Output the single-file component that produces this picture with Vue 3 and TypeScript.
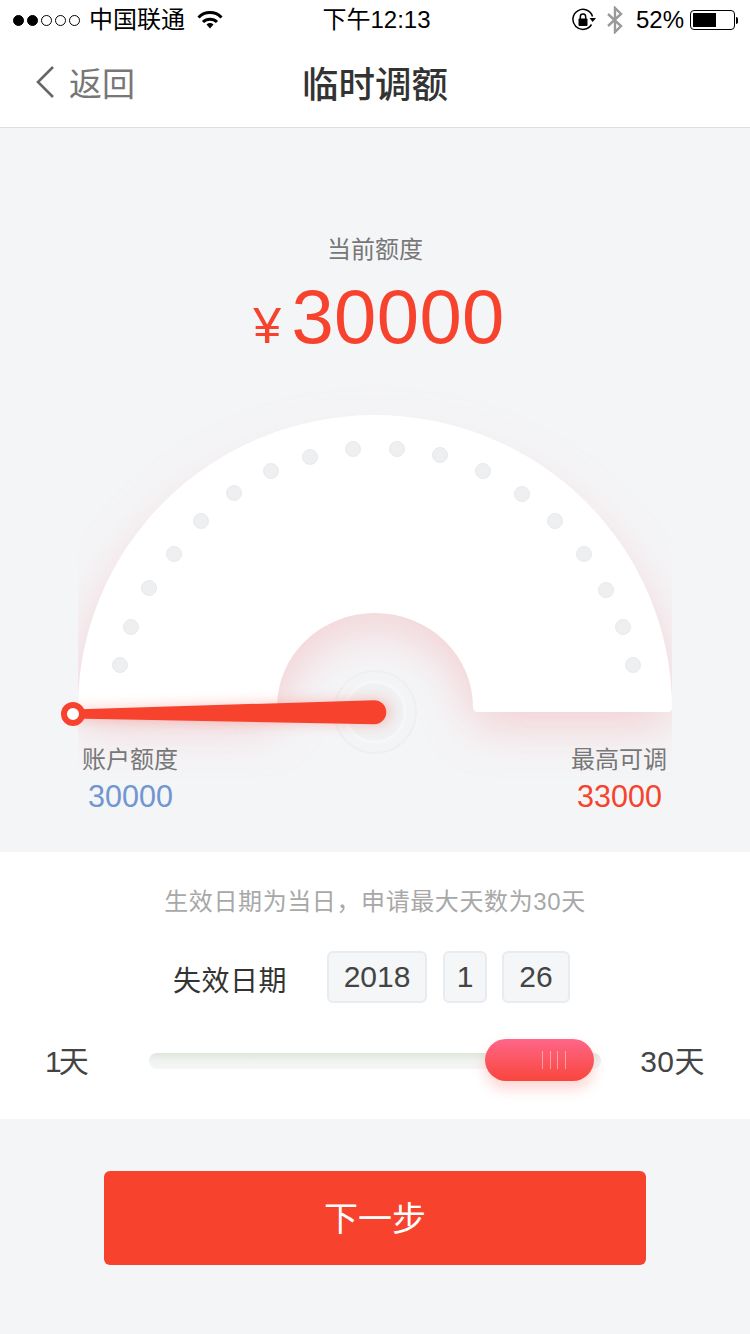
<script setup lang="ts">
// tick positions are in page coordinates, the gauge svg uses the same ones
const ticks: [number, number][] = [
  [120, 665], [131, 627], [149, 588], [174, 554], [201, 521], [234, 493],
  [271, 471], [310, 457], [353, 449], [397, 449], [440, 455], [483, 471],
  [522, 494], [555, 521], [584, 554], [606, 590], [623, 627], [633, 665],
]

const signal = [true, true, false, false, false]
const dateParts = [
  { value: '2018', kind: 'year' },
  { value: '1', kind: 'month' },
  { value: '26', kind: 'day' },
]

const gaugePath =
  'M78 708 A297 293 0 0 1 672 708 Q672 712 668 712 L478 712 Q473 712 473 707 A98 94 0 0 0 277 707 Q277 712 272 712 L82 712 Q78 712 78 708 Z'
</script>

<template>
  <div class="page">
    <div class="status">
      <div class="status__left">
        <span
          v-for="(on, i) in signal"
          :key="i"
          class="status__dot"
          :class="{ 'status__dot--on': on }" />
        <span class="status__carrier">中国联通</span>
        <svg class="status__wifi" width="26" height="18" viewBox="0 0 26 18">
          <path d="M1.5 6.5 A16 16 0 0 1 24.5 6.5" fill="none" stroke="#000" stroke-width="3" />
          <path d="M6 11 A10 10 0 0 1 20 11" fill="none" stroke="#000" stroke-width="3" />
          <path d="M9.5 13.5 A5.5 5.5 0 0 1 16.5 13.5 L13 17.5 Z" fill="#000" />
        </svg>
      </div>
      <div class="status__time">下午12:13</div>
      <div class="status__right">
        <svg width="24" height="24" viewBox="0 0 24 24">
          <path d="M20.5 8.5 A10 10 0 1 0 19.5 16.5" fill="none" stroke="#000" stroke-width="1.5" />
          <path d="M17.5 10 H24 L20.7 14 Z" fill="#000" />
          <rect x="6.5" y="10.5" width="9" height="7.5" rx="1" fill="#000" />
          <path d="M8.3 11 V8.8 A2.7 2.7 0 0 1 13.7 8.8 V11" fill="none" stroke="#000" stroke-width="1.5" />
        </svg>
        <svg class="status__bt" width="18" height="28" viewBox="0 0 18 28">
          <path d="M2 8 L15 20 L9 26 V2 L15 8 L2 20" fill="none" stroke="#9a9a9a" stroke-width="2.4" />
        </svg>
        <span class="status__pct">52%</span>
        <span class="status__battery"><span class="status__level" /></span>
        <span class="status__nub" />
      </div>
    </div>

    <header class="nav">
      <div class="nav__back">
        <svg width="20" height="34" viewBox="0 0 20 34">
          <path d="M18 2 L3 17 L18 32" fill="none" stroke="#666" stroke-width="2.6" />
        </svg>
        <span>返回</span>
      </div>
      <h1 class="nav__title">临时调额</h1>
    </header>

    <section class="quota">
      <div class="quota__label">当前额度</div>
      <div class="quota__amount"><span class="quota__yen">¥</span>30000</div>

      <div class="gauge">
        <svg class="gauge__svg" width="750" height="345" viewBox="0 400 750 345">
          <defs>
            <filter id="glow" x="-20%" y="-20%" width="140%" height="140%">
              <feGaussianBlur stdDeviation="24" />
            </filter>
            <filter id="needleGlow" x="-10%" y="-200%" width="120%" height="500%">
              <feGaussianBlur stdDeviation="7" />
            </filter>
            <clipPath id="glowClip">
              <rect x="78" y="380" width="594" height="420" />
            </clipPath>
            <!-- glow is barely there at the crown and strongest along the base -->
            <linearGradient id="glowFill" gradientUnits="userSpaceOnUse" x1="0" y1="415" x2="0" y2="620">
              <stop offset="0" stop-color="#f2a9ad" stop-opacity="0.2" />
              <stop offset="1" stop-color="#f2a9ad" />
            </linearGradient>
          </defs>
          <g clip-path="url(#glowClip)">
            <path :d="gaugePath" fill="url(#glowFill)" opacity="0.5" filter="url(#glow)" transform="translate(0 14)" />
          </g>
          <path :d="gaugePath" fill="#fff" />
          <circle
            v-for="(t, i) in ticks"
            :key="i"
            :cx="t[0]"
            :cy="t[1]"
            r="7.5"
            fill="#eeeff0"
            stroke="#e9e9eb"
            stroke-width="1" />
          <circle cx="375" cy="712" r="41" fill="#f3f4f6" stroke="#eeeff1" stroke-width="2" />
          <circle cx="375" cy="712" r="30" fill="#f0f1f3" stroke="#f6f7f8" stroke-width="3" />
          <path
            d="M73 710 L378 700 A12 12 0 0 1 378 724 L73 718 Z"
            fill="#f7432e"
            opacity="0.3"
            filter="url(#needleGlow)" />
          <path d="M73 709.5 L374 700.2 A12 12 0 0 1 374.5 724.2 L73 718.5 Z" fill="#f7432e" />
          <circle cx="73" cy="714" r="9" fill="#fff" stroke="#f7432e" stroke-width="6" />
        </svg>
      </div>

      <div class="legend">
        <div class="legend__item">
          <div class="legend__name">账户额度</div>
          <div class="legend__num legend__num--blue">30000</div>
        </div>
        <div class="legend__item">
          <div class="legend__name">最高可调</div>
          <div class="legend__num legend__num--red">33000</div>
        </div>
      </div>
    </section>

    <section class="panel">
      <p class="panel__hint">生效日期为当日，申请最大天数为30天</p>
      <div class="date">
        <span class="date__label">失效日期</span>
        <span
          v-for="part in dateParts"
          :key="part.kind"
          class="date__box"
          :class="`date__box--${part.kind}`">{{ part.value }}</span>
      </div>
      <div class="range">
        <span class="range__min">1天</span>
        <div class="range__track">
          <div class="range__thumb"><i /><i /><i /><i /></div>
        </div>
        <span class="range__max">30天</span>
      </div>
    </section>

    <div class="action">
      <button class="action__btn" type="button">下一步</button>
    </div>
  </div>
</template>

<style>
html,
body {
  margin: 0;
  background: #f4f5f7;
}
</style>

<style scoped>
.page {
  width: 750px;
  height: 1334px;
  overflow: hidden;
  background: #f4f5f7;
  font-family: "Liberation Sans", "Noto Sans CJK SC", sans-serif;
  color: #333;
}

.status {
  position: relative;
  display: flex;
  justify-content: space-between;
  align-items: center;
  height: 40px;
  padding: 0 12px 0 13px;
  background: #fff;
  color: #000;
  font-size: 24px;
}

.status__left,
.status__right {
  display: flex;
  align-items: center;
}

.status__dot {
  box-sizing: border-box;
  width: 11px;
  height: 11px;
  margin-right: 3px;
  border: 1px solid #000;
  border-radius: 50%;
}

.status__dot--on {
  background: #000;
}

.status__carrier {
  margin-left: 6px;
  line-height: 36px;
}

.status__wifi {
  margin-left: 12px;
}

.status__time {
  position: absolute;
  left: 3px;
  right: 0;
  text-align: center;
  line-height: 36px;
  pointer-events: none;
}

.status__bt {
  margin-left: 10px;
}

.status__pct {
  margin-left: 12px;
}

.status__battery {
  box-sizing: border-box;
  width: 45px;
  height: 20px;
  margin-left: 6px;
  padding: 2px;
  border: 1px solid #000;
  border-radius: 4px;
}

.status__level {
  display: block;
  width: 23px;
  height: 100%;
  background: #000;
}

.status__nub {
  width: 2px;
  height: 7px;
  margin-left: 1px;
  background: #000;
  border-radius: 0 2px 2px 0;
}

.nav {
  position: relative;
  display: flex;
  align-items: center;
  justify-content: center;
  box-sizing: border-box;
  height: 88px;
  padding-bottom: 3px;
  background: #fff;
  border-bottom: 1px solid #dedede;
}

.nav__back {
  position: absolute;
  left: 35px;
  top: 0;
  bottom: 3px;
  display: flex;
  align-items: center;
  gap: 14px;
  color: #777;
  font-size: 33px;
}

.nav__title {
  margin: 0;
  font-size: 36.5px;
  font-weight: 500;
  color: #333;
}

.quota {
  box-sizing: border-box;
  height: 724px;
  padding-top: 106px;
}

.quota__label {
  height: 32px;
  line-height: 32px;
  text-align: center;
  font-size: 24px;
  color: #777;
}

.quota__amount {
  display: flex;
  justify-content: center;
  align-items: baseline;
  height: 90px;
  margin-top: 6px;
  padding-left: 8px;
  line-height: 90px;
  font-size: 76px;
  letter-spacing: 0.4px;
  color: #f7432e;
}

.quota__yen {
  margin-right: 10px;
  font-size: 50px;
}

.gauge {
  height: 344px;
  margin-top: 38px;
}

.gauge__svg {
  display: block;
  overflow: visible;
}

.legend {
  position: relative;
  display: flex;
  justify-content: space-between;
  padding: 0 83px 0 82px;
}

.legend__item {
  text-align: center;
}

.legend__name {
  height: 32px;
  line-height: 32px;
  font-size: 24px;
  color: #777;
}

.legend__num {
  height: 40px;
  padding-left: 1px;
  line-height: 40px;
  font-size: 30.5px;
}

.legend__num--blue {
  color: #7196d0;
}

.legend__num--red {
  color: #f7432e;
}

.panel {
  box-sizing: border-box;
  height: 267px;
  padding-top: 34px;
  background: #fff;
}

.panel__hint {
  margin: 0;
  height: 32px;
  line-height: 32px;
  text-align: center;
  font-size: 24px;
  letter-spacing: 0.6px;
  color: #a8a8a8;
}

.date {
  display: flex;
  align-items: center;
  height: 52px;
  margin-top: 33px;
  padding-left: 173px;
}

.date__label {
  width: 154px;
  padding-top: 4px;
  font-size: 28px;
  letter-spacing: 0.5px;
  color: #333;
}

.date__box {
  box-sizing: border-box;
  height: 52px;
  line-height: 48px;
  text-align: center;
  font-size: 30px;
  color: #444;
  background: #f4f6f8;
  border: 2px solid #e8ecf0;
  border-radius: 6px;
}

.date__box--year {
  width: 100px;
  margin-right: 16px;
}

.date__box--month {
  width: 44px;
  margin-right: 15px;
}

.date__box--day {
  width: 68px;
}

.range {
  display: flex;
  align-items: center;
  margin-top: 32px;
  padding: 0 46px 0 45px;
  height: 52px;
}

.range__min,
.range__max {
  padding-bottom: 4px;
  font-size: 30px;
  color: #444;
}

.range__min {
  width: 104px;
  letter-spacing: -3px;
}

.range__max {
  margin-left: auto;
  margin-right: -1px;
  letter-spacing: 0.5px;
}

.range__track {
  position: relative;
  width: 452px;
  height: 16px;
  border-radius: 8px;
  background: linear-gradient(#dfe6dc, #f1f3f2 55%, #f5f6f6);
}

.range__thumb {
  position: absolute;
  left: 336px;
  top: -14px;
  display: flex;
  justify-content: center;
  gap: 6.6px;
  align-items: center;
  box-sizing: border-box;
  width: 109px;
  height: 42px;
  padding-left: 29px;
  border-radius: 21px;
  background: linear-gradient(#ff6688, #f8463c);
  box-shadow: 0 8px 14px rgba(248, 70, 60, 0.22);
}

.range__thumb i {
  width: 1px;
  height: 18px;
  background: rgba(255, 255, 255, 0.45);
}

.action {
  display: flex;
  justify-content: center;
  padding-top: 52px;
}

.action__btn {
  width: 542px;
  height: 94px;
  padding: 0 0 4px;
  border: 0;
  border-radius: 6px;
  background: #f7432e;
  color: #fff;
  font-family: inherit;
  font-size: 34px;
}
</style>
